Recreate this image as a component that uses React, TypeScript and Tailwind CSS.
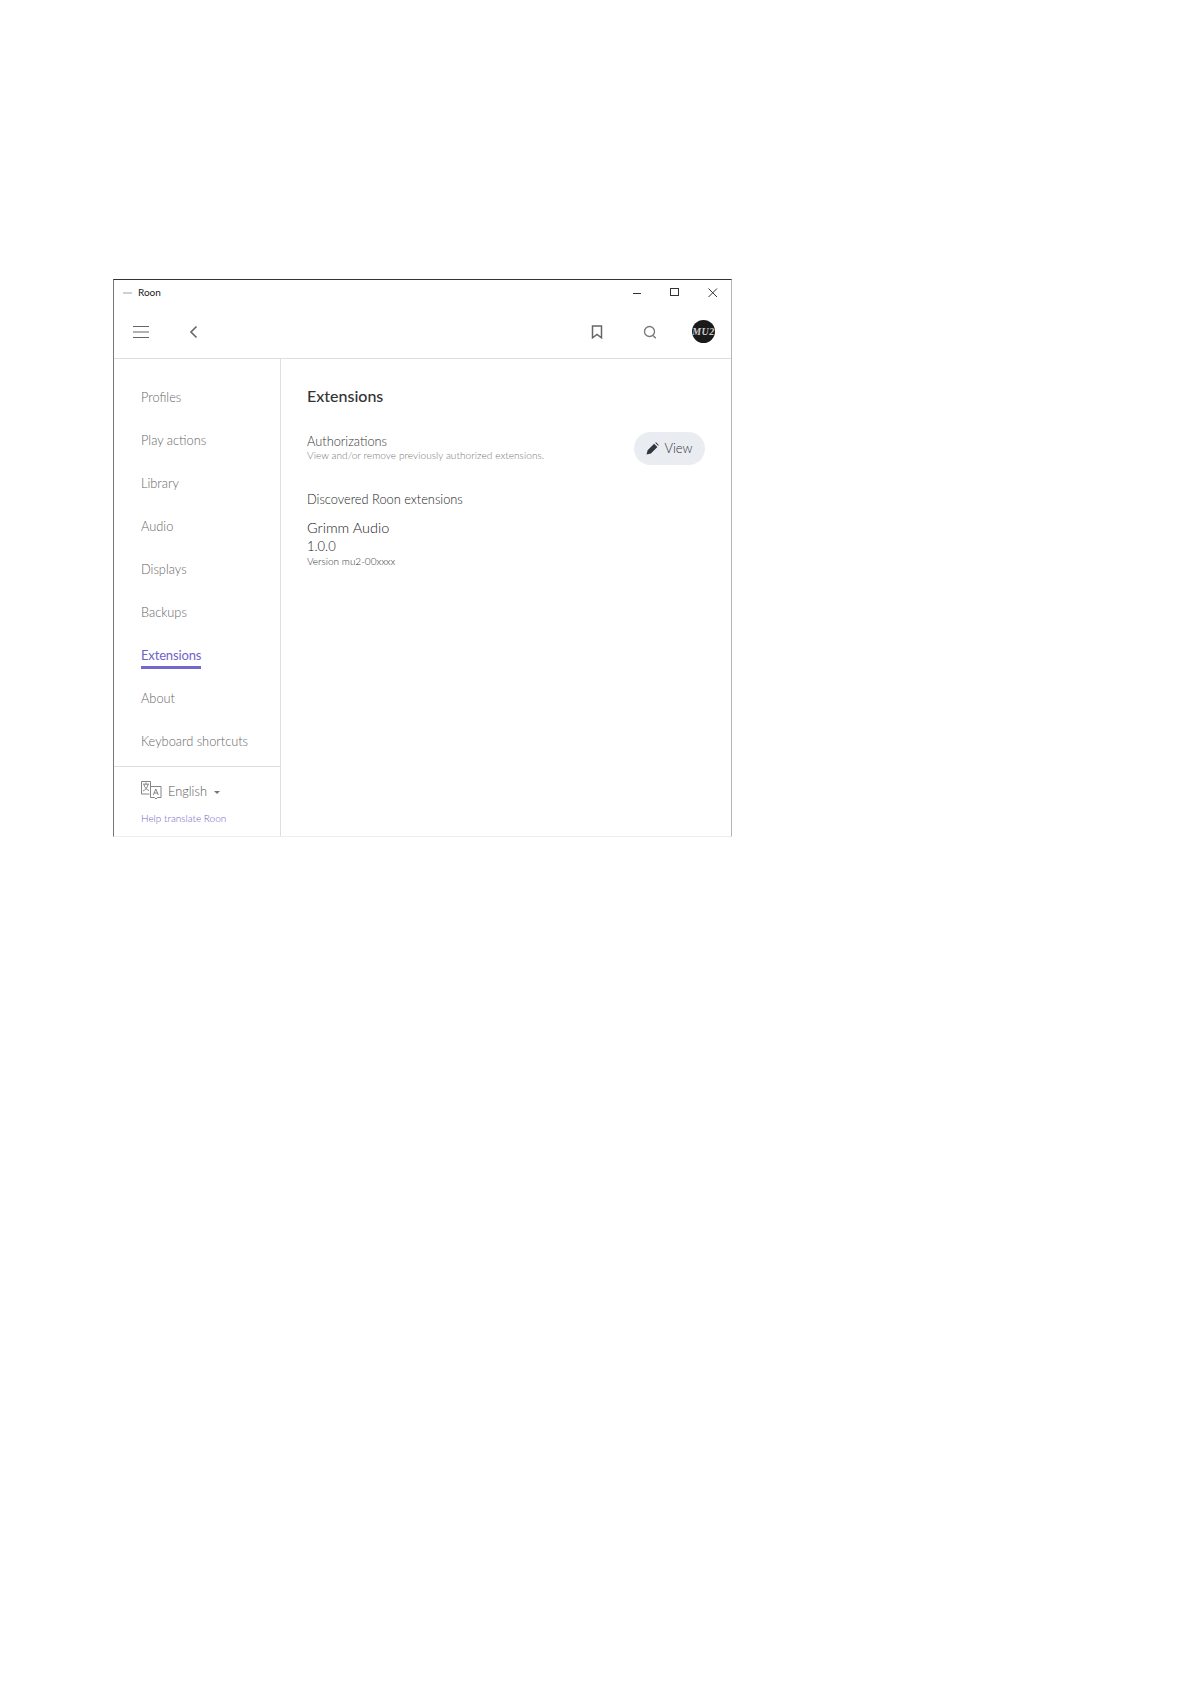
const NAV = [
  "Profiles",
  "Play actions",
  "Library",
  "Audio",
  "Displays",
  "Backups",
  "Extensions",
  "About",
  "Keyboard shortcuts",
];

function Translate() {
  return (
    <svg width="21" height="19" viewBox="0 0 21 19" fill="none" stroke="#666" strokeWidth="0.8" className="-mt-[3px]">
      <path d="M8.500 13H0.500V0.500H9.500V5.500" />
      <path d="M2 3.200H8M5 1.500V3.200M3 3.500C3.800 6.800 5.500 8.500 8 9.500M7 3.500C6.400 6.800 4.500 8.800 2 10" />
      <path d="M9.500 5.500H20V16.500H16.500L15 18L13.500 16.500H9.500Z" />
      <path d="M12.300 14L14.800 8L17.300 14M13.200 12H16.400" />
    </svg>
  );
}

export default function App() {
  return (
    <div className="min-h-[1683px] bg-white pl-[113px] pt-[279px] font-['Lato',sans-serif]">
      <div className="flex h-[558px] w-[619px] flex-col border-x border-t border-b border-l-[#777] border-r-[#b5b5b5] border-t-[#333] border-b-[#eee]">
        {/* Title bar */}
        <div className="flex h-[25px] shrink-0 items-center pl-[9px]">
          <span className="h-[2px] w-[9px] bg-[#d0d0d0]" />
          <span className="ml-[6px] -mt-[1px] text-[10px] text-[#222]">Roon</span>
          <div className="ml-auto flex items-center">
            <svg width="12" height="12" viewBox="0 0 12 12" stroke="#333" className="mr-[26px]">
              <path d="M2 6.500H10" />
            </svg>
            <svg width="12" height="12" viewBox="0 0 12 12" fill="none" stroke="#333" className="mr-[26px]">
              <rect x="1.500" y="1.500" width="8" height="7" />
            </svg>
            <svg width="12" height="12" viewBox="0 0 12 12" stroke="#333" className="mr-[12px]">
              <path d="M1.500 1.500L10 10M10 1.500L1.500 10" />
            </svg>
          </div>
        </div>

        {/* Toolbar */}
        <div className="flex h-[54px] shrink-0 items-center border-b border-[#dedede] pl-[19px] pr-[16px]">
          <svg width="16" height="14" viewBox="0 0 16 14" stroke="#666">
            <path d="M0 1.500H16M0 7H16M0 12.500H16" />
          </svg>
          <svg width="10" height="14" viewBox="0 0 10 14" fill="none" stroke="#666" strokeWidth="1.600" className="ml-[40px]">
            <path d="M7.500 1.500L2 7L7.500 12.500" />
          </svg>
          <svg width="12" height="14" viewBox="0 0 12 14" fill="none" stroke="#666" strokeWidth="1.500" className="ml-auto">
            <path d="M1.500 1H10.500V12.800L6 9.500L1.500 12.800Z" />
          </svg>
          <svg width="14" height="14" viewBox="0 0 14 14" fill="none" stroke="#777" strokeWidth="1.300" className="ml-[40px]">
            <circle cx="6.500" cy="6.500" r="5" />
            <path d="M10 10.500L12.800 13.200" />
          </svg>
          <div className="ml-[35px] flex h-[23px] w-[23px] items-center justify-center rounded-full bg-[#1a1a1a] font-['Liberation_Serif',serif] text-[10px] font-bold italic tracking-[0.5px] text-[#ccc]">
            MU2
          </div>
        </div>

        <div className="flex min-h-0 flex-1">
          {/* Sidebar */}
          <aside className="flex w-[167px] shrink-0 flex-col border-r border-[#dedede]">
            <nav className="flex flex-col pl-[27px] pt-[17px]">
              {NAV.map((label) => (
                <div key={label} className="flex h-[43px] items-center">
                  {label === "Extensions" ? (
                    <span className="relative text-[13px] tracking-[-0.15px] text-[#6f63c9]">
                      {label}
                      <span className="absolute -bottom-[4px] left-0 h-[3px] w-full bg-[#7368cf]" />
                    </span>
                  ) : (
                    <span className="text-[12.800px] font-light text-[#666]">{label}</span>
                  )}
                </div>
              ))}
            </nav>
            <div className="mt-auto h-[70px] border-t border-[#dedede] pl-[27px] pt-[15px]">
              <div className="flex items-center">
                <Translate />
                <span className="ml-[6px] text-[12.800px] font-light text-[#555]">English</span>
                <span className="ml-[7px] mt-[1px] h-0 w-0 border-x-[3.500px] border-t-[3.500px] border-x-transparent border-t-[#777]" />
              </div>
              <p className="mt-[10px] text-[10px] font-light text-[#6f63c9]">Help translate Roon</p>
            </div>
          </aside>

          {/* Content */}
          <main className="flex-1 pl-[26px] pr-[26px] pt-[27px]">
            <h1 className="text-[16px] font-medium leading-[20px] text-[#333]">Extensions</h1>
            <div className="mt-[23px] flex items-center justify-between">
              <div>
                <p className="text-[12.800px] font-light leading-[15px] text-[#333]">Authorizations</p>
                <p className="text-[10.100px] font-light leading-[12px] tracking-[0.04px] text-[#777]">View and/or remove previously authorized extensions.</p>
              </div>
              <button className="mt-[3px] flex h-[33px] w-[71px] items-center justify-center gap-[5px] rounded-full bg-[#e9ecf1] text-[13px] font-light text-[#333]">
                <svg width="13" height="13" viewBox="0 0 24 24" fill="#2f3640">
                  <path d="M1 23l2-8L15 3l6 6L9 21zM17 1.500l1.500-1 5 5-1 1.500z" />
                </svg>
                View
              </button>
            </div>
            <p className="mt-[26px] text-[12.800px] font-light leading-[16px] text-[#222]">Discovered Roon extensions</p>
            <p className="mt-[12px] text-[14.500px] font-light leading-[18px] text-[#222]">Grimm Audio</p>
            <p className="mt-[1px] text-[13px] font-light leading-[16px] text-[#222]">1.0.0</p>
            <p className="mt-[1px] text-[10px] font-light leading-[13px] text-[#333]">Version mu2-00xxxx</p>
          </main>
        </div>
      </div>
    </div>
  );
}
